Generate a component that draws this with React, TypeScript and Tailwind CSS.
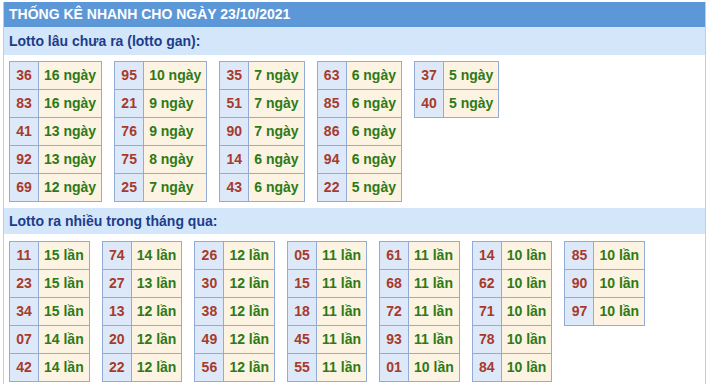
import React from "react";

type Row = [string, string];

const gan: Row[][] = [
  [["36", "16 ngày"], ["83", "16 ngày"], ["41", "13 ngày"], ["92", "13 ngày"], ["69", "12 ngày"]],
  [["95", "10 ngày"], ["21", "9 ngày"], ["76", "9 ngày"], ["75", "8 ngày"], ["25", "7 ngày"]],
  [["35", "7 ngày"], ["51", "7 ngày"], ["90", "7 ngày"], ["14", "6 ngày"], ["43", "6 ngày"]],
  [["63", "6 ngày"], ["85", "6 ngày"], ["86", "6 ngày"], ["94", "6 ngày"], ["22", "5 ngày"]],
  [["37", "5 ngày"], ["40", "5 ngày"]],
];

const nhieu: Row[][] = [
  [["11", "15 lần"], ["23", "15 lần"], ["34", "15 lần"], ["07", "14 lần"], ["42", "14 lần"]],
  [["74", "14 lần"], ["27", "13 lần"], ["13", "12 lần"], ["20", "12 lần"], ["22", "12 lần"]],
  [["26", "12 lần"], ["30", "12 lần"], ["38", "12 lần"], ["49", "12 lần"], ["56", "12 lần"]],
  [["05", "11 lần"], ["15", "11 lần"], ["18", "11 lần"], ["45", "11 lần"], ["55", "11 lần"]],
  [["61", "11 lần"], ["68", "11 lần"], ["72", "11 lần"], ["93", "11 lần"], ["01", "10 lần"]],
  [["14", "10 lần"], ["62", "10 lần"], ["71", "10 lần"], ["78", "10 lần"], ["84", "10 lần"]],
  [["85", "10 lần"], ["90", "10 lần"], ["97", "10 lần"]],
];

function Table({ rows }: { rows: Row[] }) {
  return (
    <div className="grid grid-cols-[29px_auto] auto-rows-[28px] border-l border-t border-[#93acd6]">
      {rows.map(([n, v], i) => (
        <React.Fragment key={i}>
          <div className="flex items-center justify-center bg-[#dde9f8] border-r border-b border-[#93acd6] text-[#a83a2b]">
            {n}
          </div>
          <div className="flex items-center px-[5px] bg-[#fdf3e2] border-r border-b border-[#93acd6] text-[#2d7a17] whitespace-nowrap">
            {v}
          </div>
        </React.Fragment>
      ))}
    </div>
  );
}

export default function App() {
  return (
    <div
      className="bg-white w-[711px] h-[387px] overflow-hidden pt-[2px] pl-[3px]"
      style={{ fontFamily: '"Liberation Sans", Arial, sans-serif' }}
    >
      <div className="w-[703px] h-[382px] border-x border-[#c5ccd6]">
        <div className="h-[25px] bg-[#5c97d7] text-white font-bold text-[14px] flex items-center pl-[5px]">
          THỐNG KÊ NHANH CHO NGÀY 23/10/2021
        </div>
        <div className="h-[28px] bg-[#d4e6fa] text-[#1c3d8c] font-bold text-[14px] flex items-center pl-[5px]">
          Lotto lâu chưa ra (lotto gan):
        </div>
        <div className="flex items-start gap-[12px] pl-[5px] pt-[6px] pb-[6px] font-bold text-[14px]">
          {gan.map((t, i) => (
            <Table key={i} rows={t} />
          ))}
        </div>
        <div className="h-[26px] bg-[#d4e6fa] text-[#1c3d8c] font-bold text-[14px] flex items-center pl-[5px]">
          Lotto ra nhiều trong tháng qua:
        </div>
        <div className="flex items-start gap-[12px] pl-[5px] pt-[7px] font-bold text-[14px]">
          {nhieu.map((t, i) => (
            <Table key={i} rows={t} />
          ))}
        </div>
      </div>
    </div>
  );
}
